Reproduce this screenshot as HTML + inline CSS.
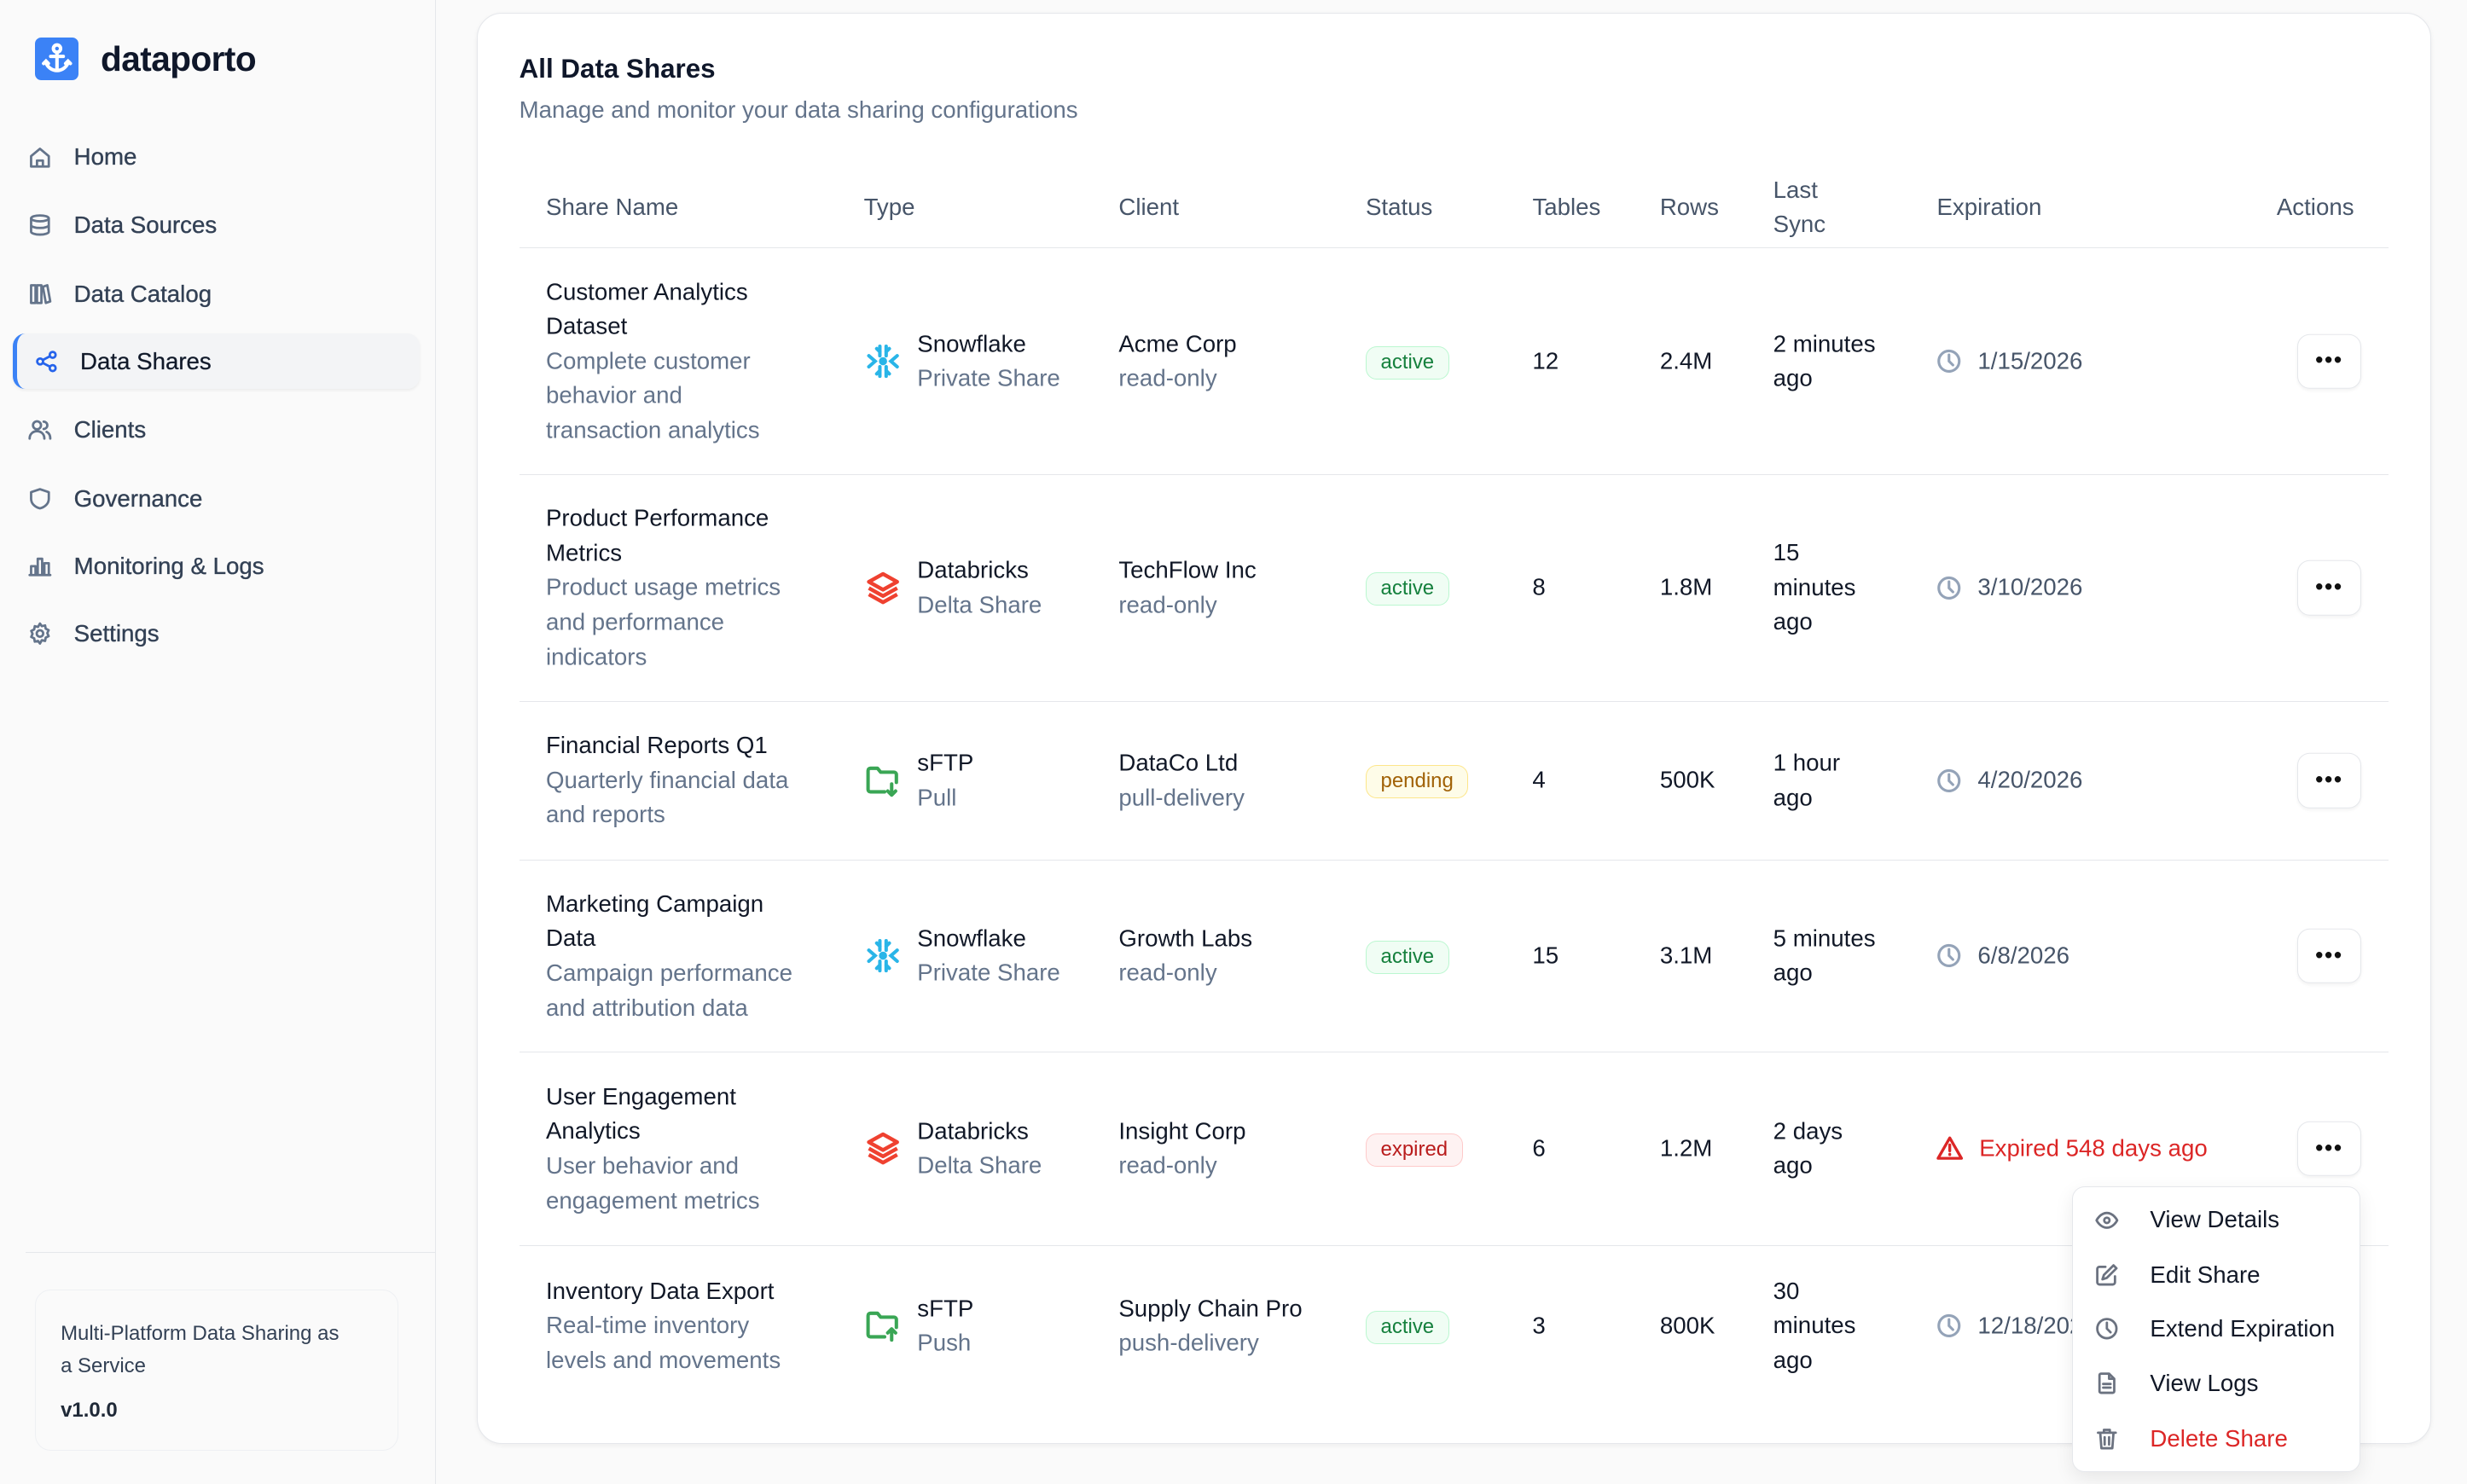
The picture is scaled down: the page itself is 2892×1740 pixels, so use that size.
<!DOCTYPE html>
<html><head><meta charset="utf-8">
<style>
*{box-sizing:border-box;margin:0;padding:0}
html,body{width:2892px;height:1740px;overflow:hidden;background:#fafafa}
#w{zoom:1.8444;width:1568px;height:944px;position:relative;font-family:"Liberation Sans",sans-serif;color:#111827;font-size:15px}
.abs{position:absolute}
#side{left:0;top:0;width:277px;height:944px;background:#fafafa;border-right:1px solid #e5e7eb}
.nav{position:absolute;left:18px;height:36px;display:flex;align-items:center;color:#334155;font-size:15px;font-weight:500;-webkit-text-stroke:0.2px #334155}
.nav svg{width:15px;height:15px;margin-right:14px;stroke:#64748b;fill:none;stroke-width:1.6;stroke-linecap:round;stroke-linejoin:round}
#card{left:303px;top:8px;width:1242px;height:910px;background:#fff;border:1px solid #e5e7eb;border-radius:16px;box-shadow:0 1px 3px rgba(0,0,0,.05)}
.th{position:absolute;top:110px;height:44px;display:flex;align-items:center;color:#475569;font-size:15px;line-height:22px}
.row{position:absolute;left:330px;width:1188px;border-bottom:1px solid #e5e7eb}
.c{position:absolute;top:50%;transform:translateY(-50%);line-height:22px;font-size:15px}
.t{color:#111827;font-weight:500}
.s{color:#64748b}
.badge{display:inline-block;font-size:13px;line-height:20px;padding:0 9px;border-radius:7px;border:1px solid}
.ok{background:#f0fdf4;border-color:#bbf7d0;color:#15803d}
.pe{background:#fefce8;border-color:#fde68a;color:#a16207}
.ex{background:#fef2f2;border-color:#fecaca;color:#b91c1c}
.btn{position:absolute;left:1130px;top:50%;transform:translateY(-50%);width:41px;height:35px;border:1px solid #e5e7eb;border-radius:8px;background:#fff;box-shadow:0 1px 2px rgba(0,0,0,.05);display:flex;align-items:center;justify-content:center;font-weight:bold;font-size:14px;letter-spacing:1px;color:#111}
.ty{display:flex;align-items:center}
.ty svg{width:24px;height:24px;margin-right:10px}
.exp{display:flex;align-items:center;color:#475569}
.exp svg{width:16px;height:16px;margin-right:10px;fill:none;stroke:#94a3b8;stroke-width:1.7;stroke-linecap:round}
.mi{position:absolute;left:14px;display:flex;align-items:center;font-size:15px;height:20px}
.mi svg{width:15px;height:15px;margin-right:20px;fill:none;stroke:#6b7280;stroke-width:1.6;stroke-linecap:round;stroke-linejoin:round}
</style></head><body><div id="w">

<div id="side" class="abs">
  <div class="abs" style="left:22px;top:24px;width:28px;height:27px;background:#3b82f6;border-radius:4px">
    <svg viewBox="0 0 28 27" width="28" height="27" fill="none" stroke="#fff" stroke-width="2.2" stroke-linecap="round"><circle cx="14" cy="7" r="2.3"/><path d="M14 9.5V21M10 12h8M7 16c1 3 4 5 7 5s6-2 7-5"/><path d="M5.5 16.5l1.5-1.5 1.5 1.5M19.5 16.5l1.5-1.5 1.5 1.5"/></svg>
  </div>
  <div class="abs" style="left:64px;top:25px;font-size:22px;font-weight:bold;color:#0f172a;letter-spacing:-0.3px">dataporto</div>

  <div class="nav" style="top:82px"><svg viewBox="0 0 16 16"><path d="M2 7l6-5 6 5v7H2z M6 14v-4h4v4"/></svg>Home</div>
  <div class="nav" style="top:125px"><svg viewBox="0 0 16 16"><ellipse cx="8" cy="3.5" rx="6" ry="2"/><path d="M2 3.5v9c0 1.1 2.7 2 6 2s6-.9 6-2v-9M2 8c0 1.1 2.7 2 6 2s6-.9 6-2"/></svg>Data Sources</div>
  <div class="nav" style="top:169px"><svg viewBox="0 0 16 16"><path d="M2 2h3v12H2zM6 2h3v12H6zM10 3l3-1 2 11-3 1z"/></svg>Data Catalog</div>
  <div class="abs" style="left:8px;top:212px;width:259px;height:35px;background:#f3f4f6;border-radius:8px;border-left:3px solid #3b82f6;box-shadow:0 1px 2px rgba(0,0,0,.06)"></div>
  <div class="nav" style="top:212px;left:22px;color:#111827"><svg viewBox="0 0 16 16" style="stroke:#2563eb"><circle cx="3.5" cy="8" r="2"/><circle cx="12" cy="3.5" r="2"/><circle cx="12" cy="12.5" r="2"/><path d="M5.3 7l4.8-2.5M5.3 9l4.8 2.5"/></svg>Data Shares</div>
  <div class="nav" style="top:255px"><svg viewBox="0 0 16 16"><circle cx="6" cy="5" r="2.7"/><path d="M1 14c0-3 2.2-5 5-5s5 2 5 5M10.5 2.5a2.5 2.5 0 010 5M12.5 9.5c1.5.7 2.5 2.3 2.5 4.5"/></svg>Clients</div>
  <div class="nav" style="top:299px"><svg viewBox="0 0 16 16"><path d="M8 1.5l6 2v4.5c0 3.5-3 5.8-6 6.5-3-.7-6-3-6-6.5V3.5z"/></svg>Governance</div>
  <div class="nav" style="top:342px"><svg viewBox="0 0 16 16"><path d="M1 14h14M2 14V8h3v6M6.5 14V3h3v11M11 14V6h3v8"/></svg>Monitoring &amp; Logs</div>
  <div class="nav" style="top:385px"><svg viewBox="0 0 16 16"><circle cx="8" cy="8" r="2.2"/><path d="M8 1.2l1.3 1.8 2.2-.5.4 2.2 2 1-.9 2 .9 2.1-2 1-.4 2.2-2.2-.5L8 14.8l-1.3-1.8-2.2.5-.4-2.2-2-1 .9-2.1-.9-2 2-1 .4-2.2 2.2.5z"/></svg>Settings</div>

  <div class="abs" style="left:16px;top:796px;width:261px;border-top:1px solid #e5e7eb"></div>
  <div class="abs" style="left:22px;top:820px;width:231px;height:102px;border:1px solid #eef0f3;border-radius:10px;background:#fafafa;padding:17px 20px 0 16px;font-size:13px;color:#334155;line-height:21px">
    Multi-Platform Data Sharing as<br>a Service
    <div style="margin-top:7px;font-weight:bold;color:#1f2937">v1.0.0</div>
  </div>
</div>

<div id="card" class="abs"></div>
<div class="abs" style="left:330px;top:34px;font-size:17px;font-weight:600;color:#0f172a">All Data Shares</div>
<div class="abs" style="left:330px;top:61px;font-size:15px;color:#64748b">Manage and monitor your data sharing configurations</div>

<div class="th" style="left:347px">Share Name</div>
<div class="th" style="left:549px">Type</div>
<div class="th" style="left:711px">Client</div>
<div class="th" style="left:868px">Status</div>
<div class="th" style="left:974px">Tables</div>
<div class="th" style="left:1055px">Rows</div>
<div class="th" style="left:1127px">Last<br>Sync</div>
<div class="th" style="left:1231px">Expiration</div>
<div class="th" style="left:1447px">Actions</div>
<div class="abs" style="left:330px;top:157px;width:1188px;border-top:1px solid #e5e7eb"></div>

<!-- Row 1 -->
<div class="row" style="top:158px;height:144px">
  <div class="c" style="left:17px"><div class="t">Customer Analytics<br>Dataset</div><div class="s">Complete customer<br>behavior and<br>transaction analytics</div></div>
  <div class="c ty" style="left:219px"><svg viewBox="0 0 24 24" fill="none" stroke="#29b5e8" stroke-width="2.2" stroke-linecap="round"><path d="M10 2.5v6M14 2.5v6M10 15.5v6M14 15.5v6M3 8.5l4 3.5-4 3.5M21 8.5l-4 3.5 4 3.5M8 4l2 2M16 4l-2 2M8 20l2-2M16 20l-2-2"/><circle cx="12" cy="12" r="1.5" fill="#29b5e8"/></svg><div><div class="t">Snowflake</div><div class="s">Private Share</div></div></div>
  <div class="c" style="left:381px"><div class="t">Acme Corp</div><div class="s">read-only</div></div>
  <div class="c" style="left:538px"><span class="badge ok">active</span></div>
  <div class="c" style="left:644px">12</div>
  <div class="c" style="left:725px">2.4M</div>
  <div class="c" style="left:797px">2 minutes<br>ago</div>
  <div class="c exp" style="left:901px"><svg viewBox="0 0 16 16"><circle cx="8" cy="8" r="6.5"/><path d="M8 4v4l2.5 2.5"/></svg>1/15/2026</div>
  <div class="btn">•••</div>
</div>
<!-- Row 2 -->
<div class="row" style="top:302px;height:144px">
  <div class="c" style="left:17px"><div class="t">Product Performance<br>Metrics</div><div class="s">Product usage metrics<br>and performance<br>indicators</div></div>
  <div class="c ty" style="left:219px"><svg viewBox="0 0 24 24" fill="none" stroke="#ef4130" stroke-width="2.4" stroke-linejoin="round"><path d="M12 3l9 5-9 5-9-5z"/><path d="M3 12l9 5 9-5M3 16l9 5 9-5"/></svg><div><div class="t">Databricks</div><div class="s">Delta Share</div></div></div>
  <div class="c" style="left:381px"><div class="t">TechFlow Inc</div><div class="s">read-only</div></div>
  <div class="c" style="left:538px"><span class="badge ok">active</span></div>
  <div class="c" style="left:644px">8</div>
  <div class="c" style="left:725px">1.8M</div>
  <div class="c" style="left:797px">15<br>minutes<br>ago</div>
  <div class="c exp" style="left:901px"><svg viewBox="0 0 16 16"><circle cx="8" cy="8" r="6.5"/><path d="M8 4v4l2.5 2.5"/></svg>3/10/2026</div>
  <div class="btn">•••</div>
</div>
<!-- Row 3 -->
<div class="row" style="top:446px;height:101px">
  <div class="c" style="left:17px"><div class="t">Financial Reports Q1</div><div class="s">Quarterly financial data<br>and reports</div></div>
  <div class="c ty" style="left:219px"><svg viewBox="0 0 24 24" fill="none" stroke="#3aa655" stroke-width="2.2" stroke-linecap="round" stroke-linejoin="round"><path d="M13 19H4a1.5 1.5 0 01-1.5-1.5v-12A1.5 1.5 0 014 4h4.5l2 2.5H19a1.5 1.5 0 011.5 1.5v5"/><path d="M17.5 14v7M15 18.5l2.5 2.5 2.5-2.5"/></svg><div><div class="t">sFTP</div><div class="s">Pull</div></div></div>
  <div class="c" style="left:381px"><div class="t">DataCo Ltd</div><div class="s">pull-delivery</div></div>
  <div class="c" style="left:538px"><span class="badge pe">pending</span></div>
  <div class="c" style="left:644px">4</div>
  <div class="c" style="left:725px">500K</div>
  <div class="c" style="left:797px">1 hour<br>ago</div>
  <div class="c exp" style="left:901px"><svg viewBox="0 0 16 16"><circle cx="8" cy="8" r="6.5"/><path d="M8 4v4l2.5 2.5"/></svg>4/20/2026</div>
  <div class="btn">•••</div>
</div>
<!-- Row 4 -->
<div class="row" style="top:547px;height:122px">
  <div class="c" style="left:17px"><div class="t">Marketing Campaign<br>Data</div><div class="s">Campaign performance<br>and attribution data</div></div>
  <div class="c ty" style="left:219px"><svg viewBox="0 0 24 24" fill="none" stroke="#29b5e8" stroke-width="2.2" stroke-linecap="round"><path d="M10 2.5v6M14 2.5v6M10 15.5v6M14 15.5v6M3 8.5l4 3.5-4 3.5M21 8.5l-4 3.5 4 3.5M8 4l2 2M16 4l-2 2M8 20l2-2M16 20l-2-2"/><circle cx="12" cy="12" r="1.5" fill="#29b5e8"/></svg><div><div class="t">Snowflake</div><div class="s">Private Share</div></div></div>
  <div class="c" style="left:381px"><div class="t">Growth Labs</div><div class="s">read-only</div></div>
  <div class="c" style="left:538px"><span class="badge ok">active</span></div>
  <div class="c" style="left:644px">15</div>
  <div class="c" style="left:725px">3.1M</div>
  <div class="c" style="left:797px">5 minutes<br>ago</div>
  <div class="c exp" style="left:901px"><svg viewBox="0 0 16 16"><circle cx="8" cy="8" r="6.5"/><path d="M8 4v4l2.5 2.5"/></svg>6/8/2026</div>
  <div class="btn">•••</div>
</div>
<!-- Row 5 -->
<div class="row" style="top:669px;height:123px">
  <div class="c" style="left:17px"><div class="t">User Engagement<br>Analytics</div><div class="s">User behavior and<br>engagement metrics</div></div>
  <div class="c ty" style="left:219px"><svg viewBox="0 0 24 24" fill="none" stroke="#ef4130" stroke-width="2.4" stroke-linejoin="round"><path d="M12 3l9 5-9 5-9-5z"/><path d="M3 12l9 5 9-5M3 16l9 5 9-5"/></svg><div><div class="t">Databricks</div><div class="s">Delta Share</div></div></div>
  <div class="c" style="left:381px"><div class="t">Insight Corp</div><div class="s">read-only</div></div>
  <div class="c" style="left:538px"><span class="badge ex">expired</span></div>
  <div class="c" style="left:644px">6</div>
  <div class="c" style="left:725px">1.2M</div>
  <div class="c" style="left:797px">2 days<br>ago</div>
  <div class="c exp" style="left:901px;color:#dc2626"><svg viewBox="0 0 16 16" style="stroke:#dc2626;width:17px;height:17px"><path d="M8 1.8L15 14H1z" stroke-linejoin="round"/><path d="M8 6v3.5M8 11.5v.3"/></svg>Expired 548 days ago</div>
  <div class="btn">•••</div>
</div>
<!-- Row 6 -->
<div class="row" style="top:792px;height:102px;border-bottom:none">
  <div class="c" style="left:17px"><div class="t">Inventory Data Export</div><div class="s">Real-time inventory<br>levels and movements</div></div>
  <div class="c ty" style="left:219px"><svg viewBox="0 0 24 24" fill="none" stroke="#3aa655" stroke-width="2.2" stroke-linecap="round" stroke-linejoin="round"><path d="M13 19H4a1.5 1.5 0 01-1.5-1.5v-12A1.5 1.5 0 014 4h4.5l2 2.5H19a1.5 1.5 0 011.5 1.5v5"/><path d="M17.5 21v-7M15 16.5l2.5-2.5 2.5 2.5"/></svg><div><div class="t">sFTP</div><div class="s">Push</div></div></div>
  <div class="c" style="left:381px"><div class="t">Supply Chain Pro</div><div class="s">push-delivery</div></div>
  <div class="c" style="left:538px"><span class="badge ok">active</span></div>
  <div class="c" style="left:644px">3</div>
  <div class="c" style="left:725px">800K</div>
  <div class="c" style="left:797px">30<br>minutes<br>ago</div>
  <div class="c exp" style="left:901px"><svg viewBox="0 0 16 16"><circle cx="8" cy="8" r="6.5"/><path d="M8 4v4l2.5 2.5"/></svg>12/18/2025</div>
</div>

<!-- dropdown -->
<div class="abs" style="left:1317px;top:754px;width:183px;height:182px;background:#fff;border:1px solid #e5e7eb;border-radius:8px;box-shadow:0 4px 12px rgba(0,0,0,.08)">
  <div class="mi" style="top:11px"><svg viewBox="0 0 16 16"><path d="M1 8s2.5-5 7-5 7 5 7 5-2.5 5-7 5-7-5-7-5z"/><circle cx="8" cy="8" r="1.8"/></svg>View Details</div>
  <div class="mi" style="top:46px"><svg viewBox="0 0 16 16"><path d="M7 2.5H3A1.5 1.5 0 001.5 4v9A1.5 1.5 0 003 14.5h9a1.5 1.5 0 001.5-1.5V9"/><path d="M12.5 1.5l2 2L8 10l-3 1 1-3z"/></svg>Edit Share</div>
  <div class="mi" style="top:80px"><svg viewBox="0 0 16 16"><circle cx="8" cy="8" r="6.5"/><path d="M8 4v4l2.5 2.5"/></svg>Extend Expiration</div>
  <div class="mi" style="top:115px"><svg viewBox="0 0 16 16"><path d="M9.5 1.5H4a1 1 0 00-1 1v11a1 1 0 001 1h8a1 1 0 001-1V5z M9.5 1.5V5H13M5.5 8.5h5M5.5 11h5"/></svg>View Logs</div>
  <div class="mi" style="top:150px;color:#dc2626"><svg viewBox="0 0 16 16"><path d="M2 4h12M6 4V2h4v2M3.5 4l.8 10.5h7.4L12.5 4M6.5 7v5M9.5 7v5"/></svg>Delete Share</div>
</div>

</div></body></html>
